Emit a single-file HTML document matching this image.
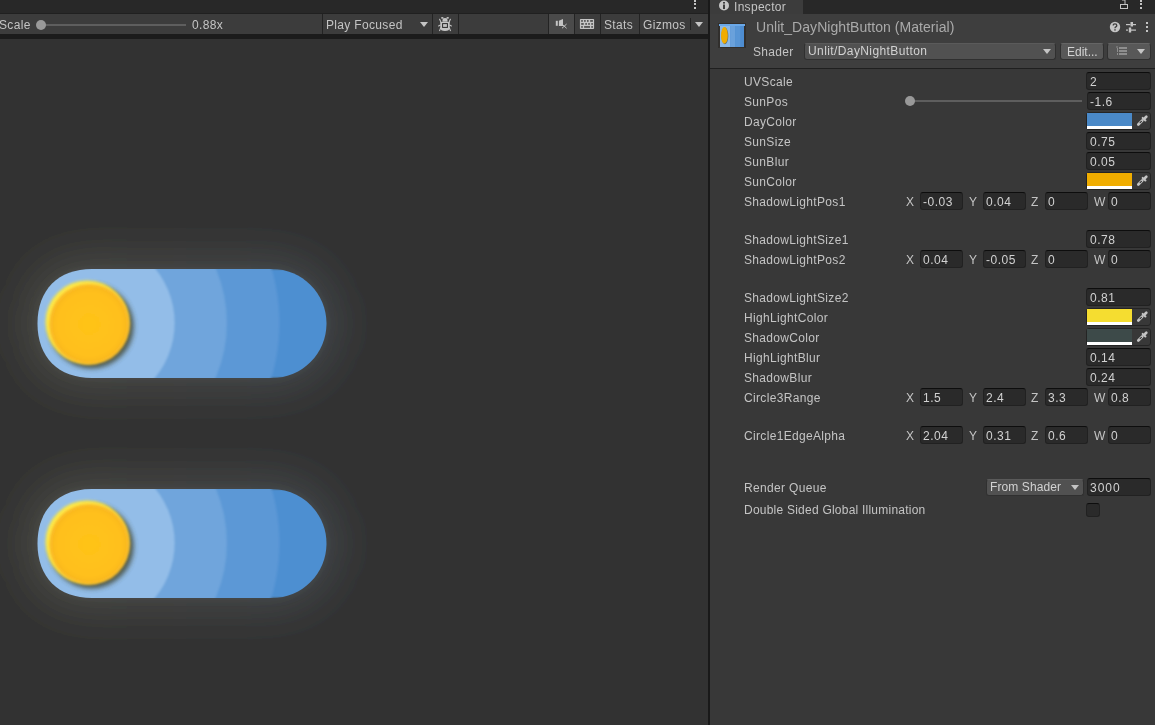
<!DOCTYPE html>
<html><head><meta charset="utf-8"><style>
*{box-sizing:border-box;margin:0;padding:0}
html,body{width:1155px;height:725px;overflow:hidden;background:#383838;font-family:"Liberation Sans",sans-serif;font-size:12px;color:#c4c4c4}
.a{position:absolute}
.t{position:absolute;will-change:transform;white-space:nowrap;line-height:14px;letter-spacing:0.33px}
.lbl{left:744px}
.fld{position:absolute;background:#2a2a2a;border:1px solid #212121;border-top-color:#0d0d0d;border-radius:3px;height:18px}
.ftx{position:absolute;will-change:transform;white-space:nowrap;line-height:14px;color:#d2d2d2;letter-spacing:0.5px}
.btn{position:absolute;background:#585858;border:1px solid #303030;border-top-color:#656565;border-radius:3px}
.sep{position:absolute;top:14px;width:1px;height:20px;background:#232323}
.arrow{position:absolute;width:0;height:0;border-left:4px solid transparent;border-right:4px solid transparent;border-top:5px solid #c4c4c4}
</style></head><body>
<div class="a" style="left:0;top:0;width:708px;height:14px;background:#282828"></div>
<div class="a" style="left:0;top:13px;width:708px;height:1px;background:#202020"></div>
<div class="a" style="left:0;top:14px;width:708px;height:20px;background:#3c3c3c"></div>
<div class="a" style="left:0;top:34px;width:708px;height:6px;background:#1b1b1b"></div>
<div class="a" style="left:0;top:40px;width:708px;height:685px;background:#313131"></div>
<div class="a" style="left:708px;top:0;width:2px;height:725px;background:#191919"></div>
<div class="a" style="left:710px;top:0;width:445px;height:14px;background:#282828"></div>
<div class="a" style="left:710px;top:0;width:93px;height:14px;background:#3c3c3c"></div>
<div class="a" style="left:710px;top:14px;width:445px;height:54px;background:#3e3e3e"></div>
<div class="a" style="left:710px;top:68px;width:445px;height:1px;background:#1f1f1f"></div>
<div class="t" style="left:-1px;top:18px;">Scale</div>
<div class="a" style="left:41px;top:24px;width:145px;height:2px;background:#5e5e5e"></div>
<div class="a" style="left:36px;top:20px;width:10px;height:10px;border-radius:50%;background:#999"></div>
<div class="t" style="left:192px;top:18px;">0.88x</div>
<div class="sep" style="left:322px"></div>
<div class="t" style="left:326px;top:18px;">Play Focused</div>
<div class="arrow" style="left:420px;top:22px"></div>
<div class="sep" style="left:432px"></div>
<svg class="a" style="left:434px;top:14px" width="24" height="20" viewBox="434 14 24 20">
<g fill="#c4c4c4">
<path d="M442.3 21.8 L442.8 18.6 Q445 17.6 447.2 18.6 L447.7 21.8 Z"/>
<ellipse cx="442.3" cy="17.9" rx="1.3" ry="0.8"/><ellipse cx="447.7" cy="17.9" rx="1.3" ry="0.8"/>
<path d="M440.3 22 H449.7 V27.5 Q449.7 31 445 31 Q440.3 31 440.3 27.5 Z"/>
</g>
<g stroke="#c4c4c4" stroke-width="1.1" fill="none" stroke-linecap="round">
<path d="M439.6 19.3 L441 22.3 M450.4 19.3 L449 22.3 M438.6 26 L440.5 25 M451.4 26 L449.5 25 M439.6 30.6 L440.6 28 M450.4 30.6 L449.4 28"/>
</g>
<rect x="442.6" y="23.6" width="4.8" height="3.8" fill="none" stroke="#2a2a2a" stroke-width="1"/>
</svg>
<div class="sep" style="left:458px"></div>
<div class="sep" style="left:548px"></div>
<div class="a" style="left:549px;top:14px;width:25px;height:20px;background:#4a4a4a"></div>
<svg class="a" style="left:549px;top:14px" width="25" height="20" viewBox="549 14 25 20">
<g fill="#c4c4c4"><rect x="555.8" y="20.8" width="2" height="5"/><path d="M558.9 20.8 L563 19 V25.9 L558.9 25.9 Z"/></g>
<path d="M562.3 24.3 L566.3 28 M566.3 24.3 L562.3 28" stroke="#c4c4c4" stroke-width="1" stroke-linecap="round"/>
</svg>
<div class="sep" style="left:574px"></div>
<svg class="a" style="left:575px;top:14px" width="25" height="20" viewBox="575 14 25 20">
<rect x="579.9" y="18.9" width="14.2" height="10.1" rx="0.8" fill="#c4c4c4"/>
<g fill="#3c3c3c"><rect x="581.2" y="20.2" width="1.6" height="1.5"/><rect x="584.1" y="20.2" width="1.6" height="1.5"/><rect x="587" y="20.2" width="1.6" height="1.5"/><rect x="590.2" y="20.2" width="2.7" height="1.5"/><rect x="581.2" y="23.2" width="2.5" height="1.5"/><rect x="585.3" y="23.2" width="1.6" height="1.5"/><rect x="588.2" y="23.2" width="1.6" height="1.5"/><rect x="591.3" y="23.2" width="1.6" height="1.5"/><rect x="581.2" y="26.2" width="1.6" height="1.5"/><rect x="584.1" y="26.2" width="5.9" height="1.5"/><rect x="591.3" y="26.2" width="1.6" height="1.5"/></g>
</svg>
<div class="sep" style="left:600px"></div>
<div class="t" style="left:604px;top:18px;">Stats</div>
<div class="sep" style="left:639px"></div>
<div class="t" style="left:643px;top:18px;">Gizmos</div>
<div class="a" style="left:690px;top:18px;width:1px;height:12px;background:#232323"></div>
<div class="arrow" style="left:695px;top:22px"></div>
<div class="a" style="left:694px;top:0px;width:2px;height:2px;background:#c4c4c4"></div>
<div class="a" style="left:694px;top:3px;width:2px;height:2px;background:#c4c4c4"></div>
<div class="a" style="left:694px;top:7px;width:2px;height:2px;background:#c4c4c4"></div>
<svg class="a" style="left:718px;top:0px" width="12" height="12" viewBox="0 0 12 12">
<circle cx="6" cy="5.5" r="5" fill="#c4c4c4"/><rect x="5" y="2" width="2" height="1.6" fill="#3c3c3c"/><rect x="5" y="4.5" width="2" height="4.5" fill="#3c3c3c"/>
</svg>
<div class="t" style="left:734px;top:0px;letter-spacing:0.3px">Inspector</div>
<svg class="a" style="left:1119px;top:0px" width="10" height="10" viewBox="0 0 10 10">
<rect x="1.5" y="4.5" width="7" height="4" fill="none" stroke="#c4c4c4" stroke-width="1"/>
<path d="M3 0 H6 V4" fill="none" stroke="#c4c4c4" stroke-width="1"/>
</svg>
<div class="a" style="left:1140px;top:0px;width:2px;height:2px;background:#c4c4c4"></div>
<div class="a" style="left:1140px;top:3px;width:2px;height:2px;background:#c4c4c4"></div>
<div class="a" style="left:1140px;top:7px;width:2px;height:2px;background:#c4c4c4"></div>
<svg class="a" style="left:714px;top:19px" width="36" height="34" viewBox="714 19 36 34">
<rect x="718" y="23" width="28" height="25" fill="#2c2a27" opacity="0.7"/>
<rect x="719" y="24" width="26" height="2" fill="#6aa8e8"/>
<rect x="720" y="26" width="24" height="21" fill="#4e8dd1"/>
<rect x="720" y="26" width="10.2" height="21" fill="#8cb9e7"/>
<rect x="730.2" y="26" width="5.1" height="21" fill="#6aa1db"/>
<rect x="735.3" y="26" width="5" height="21" fill="#5895d5"/>
<ellipse cx="724.9" cy="35.9" rx="3.4" ry="8.4" fill="#3a3520" opacity="0.6"/>
<ellipse cx="724.4" cy="35.4" rx="3.4" ry="8.4" fill="#f0ac00"/>
</svg>
<div class="t" style="left:756px;top:19px;font-size:14px;line-height:16px;color:#aaaaaa;letter-spacing:0.05px">Unlit_DayNightButton (Material)</div>
<svg class="a" style="left:1109px;top:21px" width="12" height="12" viewBox="0 0 12 12">
<circle cx="6" cy="6" r="5.2" fill="#c4c4c4"/>
<path d="M4.2 4.6 Q4.2 2.8 6 2.8 Q7.8 2.8 7.8 4.4 Q7.8 5.3 6.8 5.8 Q6 6.2 6 7.2" fill="none" stroke="#3e3e3e" stroke-width="1.3"/>
<rect x="5.3" y="8.2" width="1.4" height="1.4" fill="#3e3e3e"/>
</svg>
<svg class="a" style="left:1126px;top:22px" width="11" height="11" viewBox="0 0 11 11">
<g fill="#c4c4c4"><rect x="0" y="2" width="4.5" height="1.2"/><rect x="7" y="2" width="3" height="1.2"/><rect x="4.5" y="0" width="2.5" height="4.5"/>
<rect x="0" y="7.5" width="2" height="1.2"/><rect x="5" y="7.5" width="5" height="1.2"/><rect x="2.8" y="5.5" width="2.4" height="5"/></g>
</svg>
<div class="a" style="left:1146px;top:22px;width:2px;height:2px;background:#c4c4c4"></div>
<div class="a" style="left:1146px;top:26px;width:2px;height:2px;background:#c4c4c4"></div>
<div class="a" style="left:1146px;top:30px;width:2px;height:2px;background:#c4c4c4"></div>
<div class="t" style="left:753px;top:45px;">Shader</div>
<div class="btn" style="left:804px;top:43px;width:252px;height:17px;background:#515151;border-color:#303030;border-top-color:#5a5a5a"></div>
<div class="t" style="left:808px;top:44px;color:#d2d2d2;letter-spacing:0.4px">Unlit/DayNightButton</div>
<div class="arrow" style="left:1043px;top:49px"></div>
<div class="btn" style="left:1060px;top:43px;width:44px;height:17px"></div>
<div class="t" style="left:1067px;top:45px;color:#d2d2d2;letter-spacing:0">Edit...</div>
<div class="btn" style="left:1107px;top:43px;width:44px;height:17px"></div>
<svg class="a" style="left:1116px;top:46px" width="12" height="11" viewBox="0 0 12 11">
<g fill="#c4c4c4"><rect x="3" y="1.5" width="8" height="1"/><rect x="3" y="4.5" width="8" height="1"/><rect x="3" y="7.5" width="8" height="1"/>
<rect x="0.5" y="0.5" width="1" height="1"/><rect x="1" y="2.5" width="1" height="1"/><rect x="1" y="4.5" width="1" height="1"/><rect x="1" y="7.5" width="1" height="1"/></g>
</svg>
<div class="arrow" style="left:1137px;top:49px"></div>
<div class="t" style="left:744px;top:75px;">UVScale</div>
<div class="fld" style="left:1086px;top:72px;width:65px"></div>
<div class="ftx" style="left:1090px;top:75px">2</div>
<div class="t" style="left:744px;top:95px;">SunPos</div>
<div class="a" style="left:910px;top:100px;width:172px;height:2px;background:#5e5e5e"></div>
<div class="a" style="left:905px;top:96px;width:10px;height:10px;border-radius:50%;background:#999"></div>
<div class="fld" style="left:1087px;top:92px;width:64px"></div>
<div class="ftx" style="left:1090px;top:95px">-1.6</div>
<div class="t" style="left:744px;top:115px;">DayColor</div>
<div class="fld" style="left:1086px;top:112px;width:65px;background:#383838;border-color:#242424"></div>
<div class="a" style="left:1087px;top:113px;width:45px;height:16px;background:#4a89c8"></div>
<div class="a" style="left:1087px;top:126px;width:45px;height:3px;background:#fff"></div>
<svg class="a" style="left:1135px;top:114px" width="14" height="14" viewBox="0 0 14 14">
<g stroke="#c4c4c4" fill="none" stroke-linecap="round">
<path d="M3.3 10.5 L7.3 6.5" stroke-width="2.7"/>
<path d="M7.7 3.9 L10.4 6.5" stroke-width="2.1"/>
<path d="M9.9 4.1 L11.3 2.7" stroke-width="2.7"/>
</g>
<path d="M5.1 8.6 L6.4 7.3" stroke="#2e2e2e" stroke-width="1.1" stroke-linecap="round"/>
</svg>
<div class="t" style="left:744px;top:135px;">SunSize</div>
<div class="fld" style="left:1086px;top:132px;width:65px"></div>
<div class="ftx" style="left:1090px;top:135px">0.75</div>
<div class="t" style="left:744px;top:155px;">SunBlur</div>
<div class="fld" style="left:1086px;top:152px;width:65px"></div>
<div class="ftx" style="left:1090px;top:155px">0.05</div>
<div class="t" style="left:744px;top:175px;">SunColor</div>
<div class="fld" style="left:1086px;top:172px;width:65px;background:#383838;border-color:#242424"></div>
<div class="a" style="left:1087px;top:173px;width:45px;height:16px;background:#f0ad00"></div>
<div class="a" style="left:1087px;top:186px;width:45px;height:3px;background:#fff"></div>
<svg class="a" style="left:1135px;top:174px" width="14" height="14" viewBox="0 0 14 14">
<g stroke="#c4c4c4" fill="none" stroke-linecap="round">
<path d="M3.3 10.5 L7.3 6.5" stroke-width="2.7"/>
<path d="M7.7 3.9 L10.4 6.5" stroke-width="2.1"/>
<path d="M9.9 4.1 L11.3 2.7" stroke-width="2.7"/>
</g>
<path d="M5.1 8.6 L6.4 7.3" stroke="#2e2e2e" stroke-width="1.1" stroke-linecap="round"/>
</svg>
<div class="t" style="left:744px;top:195px;">ShadowLightPos1</div>
<div class="t" style="left:906px;top:195px;">X</div>
<div class="fld" style="left:920px;top:192px;width:43px"></div>
<div class="ftx" style="left:923px;top:195px">-0.03</div>
<div class="t" style="left:969px;top:195px;">Y</div>
<div class="fld" style="left:983px;top:192px;width:43px"></div>
<div class="ftx" style="left:986px;top:195px">0.04</div>
<div class="t" style="left:1031px;top:195px;">Z</div>
<div class="fld" style="left:1045px;top:192px;width:43px"></div>
<div class="ftx" style="left:1048px;top:195px">0</div>
<div class="t" style="left:1094px;top:195px;">W</div>
<div class="fld" style="left:1108px;top:192px;width:43px"></div>
<div class="ftx" style="left:1111px;top:195px">0</div>
<div class="t" style="left:744px;top:233px;">ShadowLightSize1</div>
<div class="fld" style="left:1086px;top:230px;width:65px"></div>
<div class="ftx" style="left:1090px;top:233px">0.78</div>
<div class="t" style="left:744px;top:253px;">ShadowLightPos2</div>
<div class="t" style="left:906px;top:253px;">X</div>
<div class="fld" style="left:920px;top:250px;width:43px"></div>
<div class="ftx" style="left:923px;top:253px">0.04</div>
<div class="t" style="left:969px;top:253px;">Y</div>
<div class="fld" style="left:983px;top:250px;width:43px"></div>
<div class="ftx" style="left:986px;top:253px">-0.05</div>
<div class="t" style="left:1031px;top:253px;">Z</div>
<div class="fld" style="left:1045px;top:250px;width:43px"></div>
<div class="ftx" style="left:1048px;top:253px">0</div>
<div class="t" style="left:1094px;top:253px;">W</div>
<div class="fld" style="left:1108px;top:250px;width:43px"></div>
<div class="ftx" style="left:1111px;top:253px">0</div>
<div class="t" style="left:744px;top:291px;">ShadowLightSize2</div>
<div class="fld" style="left:1086px;top:288px;width:65px"></div>
<div class="ftx" style="left:1090px;top:291px">0.81</div>
<div class="t" style="left:744px;top:311px;">HighLightColor</div>
<div class="fld" style="left:1086px;top:308px;width:65px;background:#383838;border-color:#242424"></div>
<div class="a" style="left:1087px;top:309px;width:45px;height:16px;background:#f5dd30"></div>
<div class="a" style="left:1087px;top:322px;width:45px;height:3px;background:#fff"></div>
<svg class="a" style="left:1135px;top:310px" width="14" height="14" viewBox="0 0 14 14">
<g stroke="#c4c4c4" fill="none" stroke-linecap="round">
<path d="M3.3 10.5 L7.3 6.5" stroke-width="2.7"/>
<path d="M7.7 3.9 L10.4 6.5" stroke-width="2.1"/>
<path d="M9.9 4.1 L11.3 2.7" stroke-width="2.7"/>
</g>
<path d="M5.1 8.6 L6.4 7.3" stroke="#2e2e2e" stroke-width="1.1" stroke-linecap="round"/>
</svg>
<div class="t" style="left:744px;top:331px;">ShadowColor</div>
<div class="fld" style="left:1086px;top:328px;width:65px;background:#383838;border-color:#242424"></div>
<div class="a" style="left:1087px;top:329px;width:45px;height:16px;background:#3d4a49"></div>
<div class="a" style="left:1087px;top:342px;width:45px;height:3px;background:#fff"></div>
<svg class="a" style="left:1135px;top:330px" width="14" height="14" viewBox="0 0 14 14">
<g stroke="#c4c4c4" fill="none" stroke-linecap="round">
<path d="M3.3 10.5 L7.3 6.5" stroke-width="2.7"/>
<path d="M7.7 3.9 L10.4 6.5" stroke-width="2.1"/>
<path d="M9.9 4.1 L11.3 2.7" stroke-width="2.7"/>
</g>
<path d="M5.1 8.6 L6.4 7.3" stroke="#2e2e2e" stroke-width="1.1" stroke-linecap="round"/>
</svg>
<div class="t" style="left:744px;top:351px;">HighLightBlur</div>
<div class="fld" style="left:1086px;top:348px;width:65px"></div>
<div class="ftx" style="left:1090px;top:351px">0.14</div>
<div class="t" style="left:744px;top:371px;">ShadowBlur</div>
<div class="fld" style="left:1086px;top:368px;width:65px"></div>
<div class="ftx" style="left:1090px;top:371px">0.24</div>
<div class="t" style="left:744px;top:391px;">Circle3Range</div>
<div class="t" style="left:906px;top:391px;">X</div>
<div class="fld" style="left:920px;top:388px;width:43px"></div>
<div class="ftx" style="left:923px;top:391px">1.5</div>
<div class="t" style="left:969px;top:391px;">Y</div>
<div class="fld" style="left:983px;top:388px;width:43px"></div>
<div class="ftx" style="left:986px;top:391px">2.4</div>
<div class="t" style="left:1031px;top:391px;">Z</div>
<div class="fld" style="left:1045px;top:388px;width:43px"></div>
<div class="ftx" style="left:1048px;top:391px">3.3</div>
<div class="t" style="left:1094px;top:391px;">W</div>
<div class="fld" style="left:1108px;top:388px;width:43px"></div>
<div class="ftx" style="left:1111px;top:391px">0.8</div>
<div class="t" style="left:744px;top:429px;">Circle1EdgeAlpha</div>
<div class="t" style="left:906px;top:429px;">X</div>
<div class="fld" style="left:920px;top:426px;width:43px"></div>
<div class="ftx" style="left:923px;top:429px">2.04</div>
<div class="t" style="left:969px;top:429px;">Y</div>
<div class="fld" style="left:983px;top:426px;width:43px"></div>
<div class="ftx" style="left:986px;top:429px">0.31</div>
<div class="t" style="left:1031px;top:429px;">Z</div>
<div class="fld" style="left:1045px;top:426px;width:43px"></div>
<div class="ftx" style="left:1048px;top:429px">0.6</div>
<div class="t" style="left:1094px;top:429px;">W</div>
<div class="fld" style="left:1108px;top:426px;width:43px"></div>
<div class="ftx" style="left:1111px;top:429px">0</div>
<div class="t" style="left:744px;top:481px;">Render Queue</div>
<div class="btn" style="left:986px;top:479px;width:98px;height:17px;background:#515151;border-top-color:#5a5a5a"></div>
<div class="t" style="left:990px;top:480px;color:#d2d2d2;letter-spacing:0.1px">From Shader</div>
<div class="arrow" style="left:1071px;top:485px"></div>
<div class="fld" style="left:1087px;top:478px;width:64px"></div>
<div class="ftx" style="left:1090px;top:481px;letter-spacing:1px">3000</div>
<div class="t" style="left:744px;top:503px;letter-spacing:0.23px">Double Sided Global Illumination</div>
<div class="fld" style="left:1086px;top:503px;width:14px;height:14px;background:#2a2a2a"></div>
<svg class="a" style="left:0;top:39px" width="708" height="686" viewBox="0 39 708 686">
<defs>
<filter id="glow" filterUnits="userSpaceOnUse" x="-150" y="-100" width="1010" height="980"><feGaussianBlur stdDeviation="22"/></filter>
<filter id="glow2" x="-50%" y="-100%" width="200%" height="300%"><feGaussianBlur stdDeviation="4"/></filter>
<filter id="pb" x="-10%" y="-10%" width="120%" height="120%"><feGaussianBlur stdDeviation="1"/></filter>
<filter id="blur1" x="-20%" y="-20%" width="140%" height="140%"><feGaussianBlur stdDeviation="1.2"/></filter>
<filter id="blur15" x="-20%" y="-20%" width="140%" height="140%"><feGaussianBlur stdDeviation="1.5"/></filter>
<filter id="blur3" x="-20%" y="-20%" width="140%" height="140%"><feGaussianBlur stdDeviation="2.6"/></filter>
<filter id="blur2" x="-20%" y="-20%" width="140%" height="140%"><feGaussianBlur stdDeviation="2"/></filter>
<linearGradient id="glowg" x1="0" y1="0" x2="1" y2="0"><stop offset="0" stop-color="#4f4f46"/><stop offset="0.35" stop-color="#494a46"/><stop offset="1" stop-color="#43484e"/></linearGradient>
<radialGradient id="sung" cx="0.5" cy="0.5" r="0.5"><stop offset="0" stop-color="#ffc318"/><stop offset="0.8" stop-color="#ffc01c"/><stop offset="1" stop-color="#f8b522"/></radialGradient>

<clipPath id="pc1"><path d="M92.0,269 H272.0 C302.084,269 326.5,293.416 326.5,323.5 C326.5,353.584 302.084,378 272.0,378 H92.0 C58.21,378 37.5,357.29 37.5,323.5 C37.5,289.71 58.21,269 92.0,269 Z"/></clipPath>
<clipPath id="pc2"><path d="M92.0,489 H272.0 C302.084,489 326.5,513.4159999999999 326.5,543.5 C326.5,573.5840000000001 302.084,598 272.0,598 H92.0 C58.21,598 37.5,577.29 37.5,543.5 C37.5,509.71 58.21,489 92.0,489 Z"/></clipPath>
</defs>
<g filter="url(#glow)"><rect x="-120" y="-40" width="950" height="860" fill="#313131"/><path d="M92.0,261 H272.0 C306.5,261 334.5,289.0 334.5,323.5 C334.5,358.0 306.5,386 272.0,386 H92.0 C53.25,386 29.5,362.25 29.5,323.5 C29.5,284.75 53.25,261 92.0,261 Z" fill="url(#glowg)"/><path d="M92.0,481 H272.0 C306.5,481 334.5,509.0 334.5,543.5 C334.5,578.0 306.5,606 272.0,606 H92.0 C53.25,606 29.5,582.25 29.5,543.5 C29.5,504.75 53.25,481 92.0,481 Z" fill="url(#glowg)"/></g>
<path d="M92.0,269 H272.0 C302.084,269 326.5,293.416 326.5,323.5 C326.5,353.584 302.084,378 272.0,378 H92.0 C58.21,378 37.5,357.29 37.5,323.5 C37.5,289.71 58.21,269 92.0,269 Z" fill="#565b60" opacity="0.35" filter="url(#glow2)"/>
<g clip-path="url(#pc1)" filter="url(#pb)">
<rect x="30" y="269" width="300" height="109" fill="#4e8fd1"/>
<circle cx="88.6" cy="323" r="190.8" fill="#5c98d6"/>
<circle cx="88.6" cy="323" r="138.3" fill="#70a5dc"/>
<circle cx="88.6" cy="323" r="86" fill="#93bde8"/>
</g>
<circle cx="91.4" cy="326.2" r="42.3" fill="#3a3f2a" opacity="0.8" filter="url(#blur3)"/>
<circle cx="87.2" cy="322.2" r="41.8" fill="#ffeb48" filter="url(#blur15)"/>
<circle cx="89.4" cy="324.2" r="40.2" fill="url(#sung)" filter="url(#blur15)"/>
<path d="M92.0,489 H272.0 C302.084,489 326.5,513.4159999999999 326.5,543.5 C326.5,573.5840000000001 302.084,598 272.0,598 H92.0 C58.21,598 37.5,577.29 37.5,543.5 C37.5,509.71 58.21,489 92.0,489 Z" fill="#565b60" opacity="0.35" filter="url(#glow2)"/>
<g clip-path="url(#pc2)" filter="url(#pb)">
<rect x="30" y="489" width="300" height="109" fill="#4e8fd1"/>
<circle cx="88.6" cy="543" r="190.8" fill="#5c98d6"/>
<circle cx="88.6" cy="543" r="138.3" fill="#70a5dc"/>
<circle cx="88.6" cy="543" r="86" fill="#93bde8"/>
</g>
<circle cx="91.4" cy="546.2" r="42.3" fill="#3a3f2a" opacity="0.8" filter="url(#blur3)"/>
<circle cx="87.2" cy="542.2" r="41.8" fill="#ffeb48" filter="url(#blur15)"/>
<circle cx="89.4" cy="544.2" r="40.2" fill="url(#sung)" filter="url(#blur15)"/>
</svg>
</body></html>
